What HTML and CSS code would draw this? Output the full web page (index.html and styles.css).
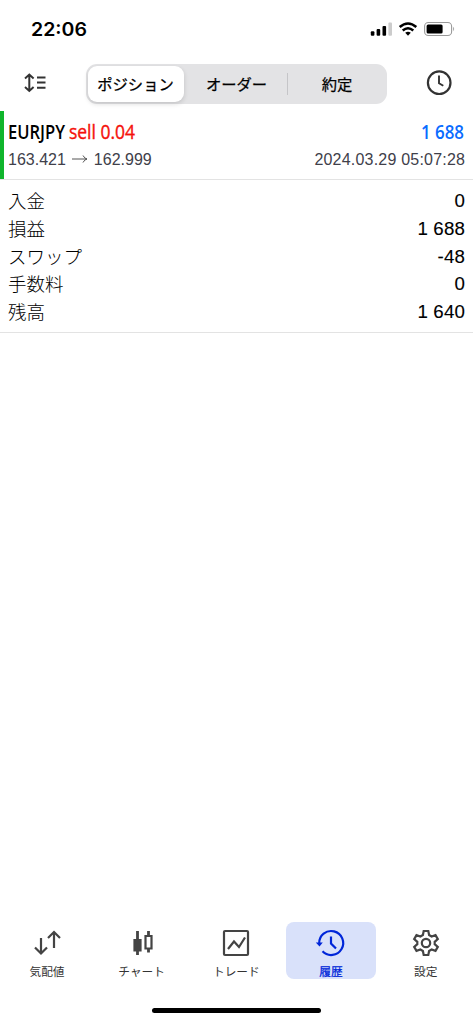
FILE: index.html
```html
<!DOCTYPE html>
<html lang="ja">
<head>
<meta charset="utf-8">
<meta name="viewport" content="width=device-width, initial-scale=1">
<title>履歴</title>
<link rel="stylesheet" href="styles.css">
</head>
<body>
<div class="app">
  <header class="status">
    <svg class="clock-time" width="66" height="24"><text x="1" y="15" textLength="56" lengthAdjust="spacingAndGlyphs">22:06</text></svg>
    <svg class="indicators" width="86" height="16" viewBox="370 21 86 16">
      <rect x="370.8" y="31.2" width="3.6" height="4.5" rx="1"/>
      <rect x="376.6" y="29" width="3.6" height="6.7" rx="1"/>
      <rect x="382.5" y="26" width="3.6" height="9.7" rx="1"/>
      <rect x="388.4" y="22.5" width="3.6" height="13.2" rx="1" fill="#ccc"/>
      <g fill="none" stroke="#000" stroke-width="2.5">
        <path d="M399.7 27Q408 20 416.3 27"/>
        <path d="M402.7 30.5Q408 26 413.3 30.5"/>
      </g>
      <path d="M405.2 32.8Q408 30.6 410.8 32.8L408 35.7Z"/>
      <rect x="424.6" y="22.5" width="27" height="13" rx="3.8" fill="none" stroke="#999" stroke-width="1.1"/>
      <rect x="426.6" y="24.5" width="16" height="9" rx="1.5"/>
      <path d="M453.2 26.8q1.9 2.2 0 4.4z" fill="#999"/>
    </svg>
  </header>
  <nav class="toolbar">
    <svg width="26" height="24" viewBox="22 71 26 24" fill="none" stroke="#333" stroke-width="2">
      <path d="M29.3 75v16M25 78.4l4.3-3.9 4.3 3.9M25 87l4.3 3.9 4.3-3.9M37 77.5h8.5M37 82.6h8.5M37 87.7h8.5"/>
    </svg>
    <div class="segments">
      <button class="segment selected">ポジション</button>
      <button class="segment">オーダー</button>
      <button class="segment divided">約定</button>
    </div>
    <svg class="period" width="28" height="28" viewBox="425 69 28 28" fill="none" stroke="#333" stroke-width="2.2">
      <circle cx="439.2" cy="82.7" r="11.3"/><path d="M439 75.6v7.6l4.3 2.5" stroke-width="1.9"/>
    </svg>
  </nav>
  <main>
    <section class="deal">
      <svg class="deal-title" width="136" height="28">
        <text class="symbol" x="0" y="19" textLength="57" lengthAdjust="spacingAndGlyphs">EURJPY</text>
        <text class="sell" x="61" y="19" textLength="66" lengthAdjust="spacingAndGlyphs">sell 0.04</text>
      </svg>
      <svg class="deal-profit" width="46" height="28"><text x="2" y="19" textLength="43" lengthAdjust="spacingAndGlyphs">1 688</text></svg>
      <div class="prices"><span>163.421</span><svg width="16" height="10" viewBox="0 0 16 10"><path d="M0 5h15M11 1.5Q12.5 4.5 15 5Q12.5 5.5 11 8.5"/></svg><span>162.999</span></div>
      <time>2024.03.29 05:07:28</time>
    </section>
    <dl class="summary">
      <div><dt>入金</dt><dd>0</dd></div>
      <div><dt>損益</dt><dd>1 688</dd></div>
      <div><dt>スワップ</dt><dd>-48</dd></div>
      <div><dt>手数料</dt><dd>0</dd></div>
      <div><dt>残高</dt><dd>1 640</dd></div>
    </dl>
  </main>
  <nav class="tabs">
    <a class="tab"><svg viewBox="0 0 32 32"><path d="M10 11v16M4 20.5l6 6 6-6M23 21V5M17 11l6-6 6 6"/></svg><span>気配値</span></a>
    <a class="tab"><svg viewBox="0 0 32 32"><path d="M11.5 4v24M22.500 4v4M22.500 22v3.500" stroke-width="2.800"/><path d="M7.400 12h8.200v12.500H7.400z" fill="#444" stroke="none"/><path d="M19.500 9h6v12.500h-6z"/></svg><span>チャート</span></a>
    <a class="tab"><svg viewBox="0 0 32 32"><rect x="4" y="4" width="24" height="24" rx="1"/><path d="M8 22l6-7.500 5 5.500 6-9.500"/></svg><span>トレード</span></a>
    <a class="tab active"><svg viewBox="0 0 32 32"><path d="M4.200 16.500A12 12 0 1 1 7.500 24.300M16 9.500v7l5 5"/><path d="M.8 15.500h7L4.500 19.500z" fill="#0026d9" stroke="none"/></svg><span>履歴</span></a>
    <a class="tab"><svg viewBox="0 0 32 32"><path d="M13.700 4h4.600l.8 4 2.500 1.500 3.900-1.400 2.300 4-3.100 2.700v2.400l3.100 2.700-2.300 4-3.900-1.400-2.500 1.500-.8 4h-4.600l-.8-4-2.500-1.500-3.900 1.400-2.300-4 3.100-2.700v-2.400l-3.100-2.700 2.300-4 3.900 1.400 2.500-1.500z"/><circle cx="16" cy="16" r="4.200"/></svg><span>設定</span></a>
  </nav>
  <div class="home"></div>
</div>
</body>
</html>
```
FILE: styles.css
```css
* { box-sizing: border-box; }
body { margin: 0; background: #fff; color: #000; font-family: "Liberation Sans", "Noto Sans CJK JP", sans-serif; }
.app { width: 473px; height: 1024px; display: flex; flex-direction: column; overflow: hidden; }
svg { display: block; flex: none; overflow: visible; }

.status { height: 62px; padding: 21px 17px 0 30px; display: flex; justify-content: space-between; align-items: flex-start; }
.clock-time text { font: 600 18.5px Inter, sans-serif; }

.toolbar { height: 49px; padding: 2px 20px 0 22px; display: flex; justify-content: flex-start; align-items: flex-start; }
.toolbar > svg { margin-top: 7px; }
.toolbar > .period { margin: 5px 0 0 38px; }
.segments { width: 301px; height: 40px; margin-left: 38px; padding: 2px; display: grid; grid-template-columns: 96px 102px 99px; border-radius: 11px; background: #e3e3e5; }
.segment { position: relative; border: 0; padding: 0 0 1px 3px; border-radius: 9px; background: none; color: #000; font: 400 15.3px/35px "Noto Sans CJK JP", sans-serif; -webkit-text-stroke: .25px #000; white-space: nowrap; }
.segment.selected { padding: 0 1px 1px 0; background: #fff; box-shadow: 0 2px 5px rgba(0, 0, 0, .14); }
.divided::before { content: ""; position: absolute; left: 1px; top: 7px; width: 1px; height: 22px; background: #c5c5c8; }

main { flex: 1; }
.deal { height: 69px; padding: 9px 8px 0; background: linear-gradient(#10b52c, #10b52c) 0 0 / 4px 68px no-repeat; border-bottom: 1px solid #e3e3e3; display: grid; grid-template: 28px 22px / 1fr auto; }
.deal-title text, .deal-profit text { font: 600 20px "Open Sans", sans-serif; }
.deal-title .sell { fill: #f5110b; font-weight: 400; stroke: #f5110b; stroke-width: .4px; }
.deal-profit { justify-self: end; }
.deal-profit text { fill: #0a6cff; }
.prices, time { color: #40404a; font-size: 16px; line-height: 23px; }
.prices { display: flex; align-items: center; gap: 6px; }
time { letter-spacing: .21px; margin-right: -.2px; }
.prices path { fill: none; stroke: #555; stroke-width: 1; }

.summary { margin: 0; height: 153px; padding: 7px 8px 0; border-bottom: 1px solid #e3e3e3; }
.summary div { height: 27.8px; display: flex; justify-content: space-between; align-items: flex-start; }
.summary dt { font: 300 18.5px/26.5px "Noto Sans CJK JP", sans-serif; }
.summary dd { margin: 0; font-size: 18.7px; letter-spacing: .15px; line-height: 28.4px; -webkit-text-stroke: .12px #000; }

.tabs { height: 57px; margin-bottom: 29px; display: grid; grid-template: 57px / repeat(5, 90px); column-gap: 4.7px; margin-left: 2px; }
.tab { display: flex; flex-direction: column; align-items: center; padding-top: 5px; border-radius: 8px; color: #333; font: 400 11.7px/18px "Noto Sans CJK JP", sans-serif; }
.tab svg { width: 32px; height: 32px; margin-bottom: 3px; fill: none; stroke: #444; stroke-width: 2.2; }
.tab.active { background: #d9e1fa; color: #0026d9; -webkit-text-stroke: .25px #0026d9; }
.tab.active svg { stroke: #0026d9; }
.home { width: 169px; height: 5px; margin: 0 auto 11px; border-radius: 3px; background: #000; }
```
